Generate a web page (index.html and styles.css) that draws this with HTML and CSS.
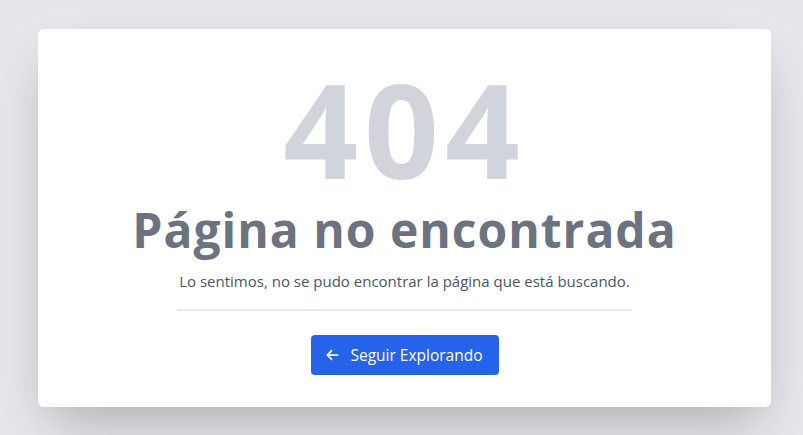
FILE: index.html
```html
<!DOCTYPE html>
<html lang="es">
<head>
<meta charset="utf-8">
<title>404</title>
<link rel="stylesheet" href="styles.css">
</head>
<body>
<main class="page">
  <section class="card">
    <div class="code">404</div>
    <h1 class="title">Página no encontrada</h1>
    <p class="text">Lo sentimos, no se pudo encontrar la página que está buscando.</p>
    <hr class="rule">
    <a class="btn" href="#">
      <svg class="btn-icon" viewBox="0 0 448 512" width="13" height="14" aria-hidden="true"><path fill="currentColor" d="M9.4 233.4c-12.5 12.5-12.5 32.8 0 45.3l160 160c12.5 12.5 32.8 12.5 45.3 0s12.5-32.8 0-45.3L109.2 288H416c17.7 0 32-14.3 32-32s-14.3-32-32-32H109.3L214.6 118.6c12.5-12.5 12.5-32.8 0-45.3s-32.8-12.5-45.3 0l-160 160z"/></svg>
      <span>Seguir Explorando</span>
    </a>
  </section>
</main>
</body>
</html>
```

FILE: styles.css
```css
* { box-sizing: border-box; }
html, body { margin: 0; height: 100%; }
body {
  background: #e5e7eb;
  font-family: "Open Sans", "Noto Sans", sans-serif;
}
.page {
  height: 100%;
  padding: 29px 32px 28px 38px;
  display: flex;
}
.card {
  flex: 1;
  background: #fff;
  border-radius: 6px;
  box-shadow: 0 25px 50px -12px rgba(0,0,0,0.25);
  display: flex;
  flex-direction: column;
  align-items: center;
  padding-top: 34px;
}
.code {
  font-size: 131px;
  font-weight: 700;
  line-height: 131px;
  letter-spacing: 6px;
  color: #d1d5db;
}
.title {
  margin: 7px 0 0;
  font-size: 48px;
  font-weight: 700;
  line-height: 58px;
  letter-spacing: 1px;
  color: #6b7280;
}
.text {
  margin: 10px 0 0;
  font-size: 15px;
  line-height: 24px;
  color: #4b5563;
}
.rule {
  width: 455px;
  margin: 16px 0 0;
  border: 0;
  border-top: 2px solid #e5e7eb;
}
.btn {
  margin-top: 24px;
  height: 40px;
  width: 188px;
  display: flex;
  align-items: center;
  justify-content: center;
  gap: 11px;
  background: #2563eb;
  color: #fff;
  border-radius: 4px;
  text-decoration: none;
  font-size: 15.5px;
}
.btn-icon { display: block; }
```
